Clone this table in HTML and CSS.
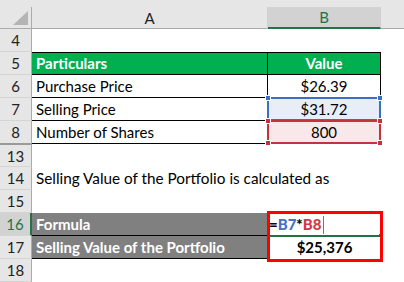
FILE: index.html
```html
<!DOCTYPE html>
<html>
<head>
<meta charset="utf-8">
<link rel="stylesheet" href="styles.css">
</head>
<body>
<div class="sheet">
  <div class="strip"></div>

  <div class="corner"><span class="tri"></span></div>
  <div class="colhead">A</div>
  <div class="colhead sel">B</div>
  <div class="colhead rest"></div>

  <div class="rh">4</div><div class="c"></div><div class="c"></div><div class="c"></div>

  <div class="rh">5</div>
  <div class="c t hd first">Particulars</div>
  <div class="c t hd first mid">Value</div>
  <div class="c"></div>

  <div class="rh">6</div>
  <div class="c t">Purchase Price</div>
  <div class="c t mid">$26.39</div>
  <div class="c"></div>

  <div class="rh">7</div>
  <div class="c t">Selling Price</div>
  <div class="c t mid refcell blue"><span class="sq tl"></span><span class="sq tr"></span>$31.72</div>
  <div class="c"></div>

  <div class="rh gap">8</div>
  <div class="c t">Number of Shares</div>
  <div class="c t mid refcell red"><span class="sq tl"></span><span class="sq tr"></span><span class="sq bl"></span><span class="sq br"></span>800</div>
  <div class="c"></div>

  <div class="rh gap2">13</div><div class="c"></div><div class="c"></div><div class="c"></div>

  <div class="rh">14</div>
  <div class="c note">Selling Value of the Portfolio is calculated as</div>

  <div class="rh">15</div><div class="c"></div><div class="c"></div><div class="c"></div>

  <div class="rh active">16</div>
  <div class="c t gray">Formula</div>
  <div class="c formula"><b>=</b><b class="fb">B7</b><b>*</b><b class="fr">B8</b><span class="caret"></span><span class="edit"></span><span class="redbox"></span></div>
  <div class="c"></div>

  <div class="rh">17</div>
  <div class="c t gray">Selling Value of the Portfolio</div>
  <div class="c total">$25,376</div>
  <div class="c"></div>

  <div class="rh">18</div><div class="c"></div><div class="c"></div><div class="c"></div>
</div>
</body>
</html>
```

FILE: styles.css
```css
* { box-sizing: border-box; }
html, body { margin: 0; padding: 0; background: #fff; }
body { width: 404px; height: 282px; overflow: hidden; font-family: Lato, "Open Sans", sans-serif; font-size: 15px; color: #000; }

.sheet {
  display: grid;
  grid-template-columns: 32px 236px 113px 23px;
  grid-template-rows: 7px 22px repeat(11, 23px);
  width: 404px;
}

.strip { grid-column: 1 / -1; background: #e6e6e6; }

.corner { background: #e6e6e6; border-right: 1px solid #ababab; border-bottom: 1px solid #ababab; position: relative; }
.tri { position: absolute; right: 3px; bottom: 3px; width: 0; height: 0; border-left: 15px solid transparent; border-bottom: 14px solid #b4b4b4; }

.colhead { background: #e6e6e6; border-bottom: 1px solid #ababab; border-right: 1px solid #d0d0d0; text-align: center; line-height: 22px; color: #222; }
.colhead.sel { background: #d2d2d2; color: #217346; border-bottom: 2px solid #217346; line-height: 21px; }
.colhead.rest { border-right: 0; }

.rh { background: #e6e6e6; border-right: 1px solid #ababab; border-bottom: 1px solid #d4d4d4; text-align: center; line-height: 22px; color: #222; }
.rh.gap { border-bottom: 1px solid #9a9a9a; }
.rh.gap2 { border-top: 1px solid #9a9a9a; }
.rh.active { background: #d2d2d2; color: #217346; border-right: 2px solid #217346; }

.c { min-width: 0; position: relative; }
.t { border-bottom: 1px solid #000; border-right: 1px solid #000; padding: 0 4px; line-height: 23px; white-space: nowrap; }
.first { border-top: 1px solid #000; line-height: 21px; }
.mid { text-align: center; }
.hd { background: #00b050; color: #fff; font-weight: bold; }

.refcell { margin-left: -1px; margin-top: -1px; height: 24px; line-height: 20px; }
.refcell.blue { border: 2px solid #3c6ec5; background: #e8eef8; }
.refcell.red { border: 2px solid #c4323d; background: #f9e8e9; }
.sq { position: absolute; width: 6px; height: 6px; border: 1px solid #fff; z-index: 3; }
.blue .sq { background: #3c6ec5; }
.red .sq { background: #c4323d; }
.sq.tl { left: -4px; top: -4px; }
.sq.tr { right: -4px; top: -4px; }
.sq.bl { left: -4px; bottom: -4px; }
.sq.br { right: -4px; bottom: -4px; }

.note { grid-column: 2 / -1; padding: 0 4px; line-height: 23px; white-space: nowrap; font-size: 15.3px; }

.gray { background: #808080; color: #fff; font-weight: bold; }

.formula { padding: 0 1px; line-height: 22px; font-weight: bold; white-space: nowrap; }
.fb { color: #4472c4; }
.fr { color: #d23a45; }
.caret { display: inline-block; width: 1px; height: 18px; background: #777; vertical-align: -4px; margin-left: 2px; }
.edit { position: absolute; left: 2px; right: 2px; bottom: -1px; height: 2px; background: #217346; }
.edit::after { content: ""; position: absolute; right: -3px; top: -1px; width: 3px; height: 3px; background: #217346; }

.total { text-align: center; font-weight: bold; line-height: 23px; }

.redbox { position: absolute; left: -1px; top: -2px; width: 116px; height: 51px; border: 3px solid #f00; z-index: 4; pointer-events: none; }
```
